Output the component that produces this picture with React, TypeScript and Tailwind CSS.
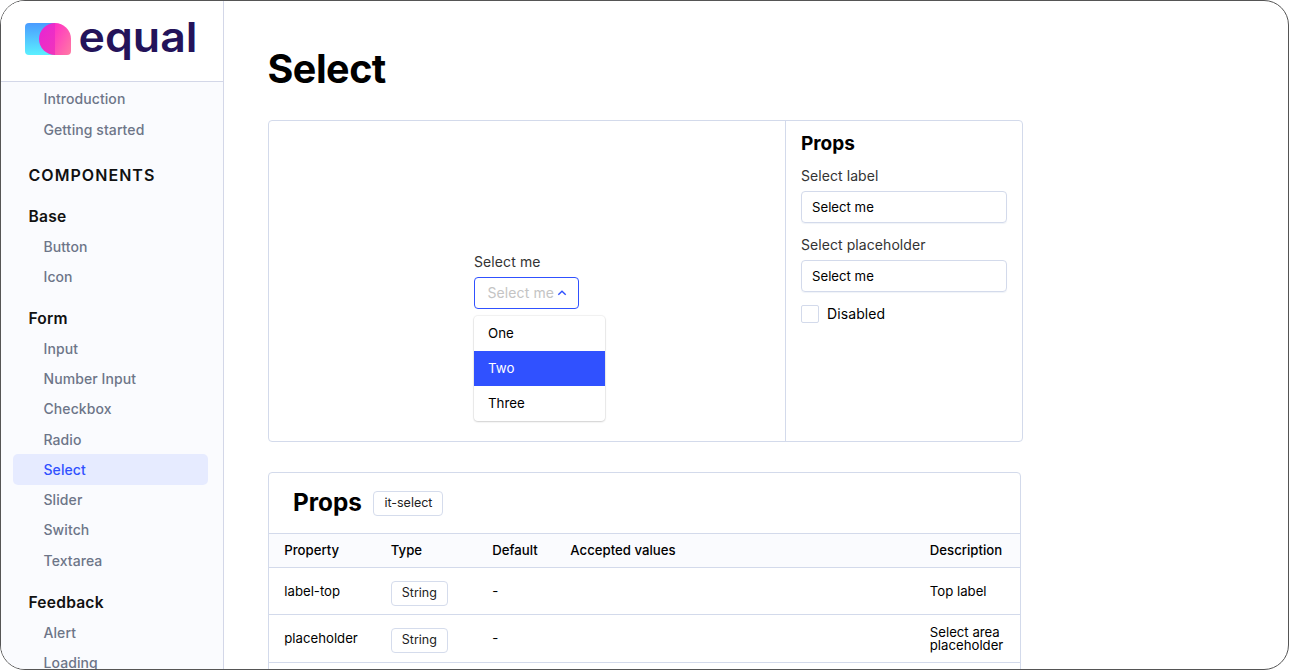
import React from "react";

const groups = [
  { title: "Base", items: ["Button", "Icon"] },
  {
    title: "Form",
    items: ["Input", "Number Input", "Checkbox", "Radio", "Select", "Slider", "Switch", "Textarea"],
  },
  { title: "Feedback", items: ["Alert", "Loading"] },
];

const rows = [
  { property: "label-top", type: "String", def: "-", accepted: "", description: "Top label" },
  { property: "placeholder", type: "String", def: "-", accepted: "", description: "Select area placeholder" },
  { property: "", type: "", def: "", accepted: "", description: "" },
];

function Logo() {
  return (
    <svg width="190" height="56" viewBox="0 0 190 56" className="block overflow-visible">
      <defs>
        <linearGradient id="sky" x1="0" y1="0" x2="0" y2="1">
          <stop offset="0" stopColor="#4a9bff" />
          <stop offset="1" stopColor="#5bf0ff" />
        </linearGradient>
        <linearGradient id="pink" x1="0" y1="0" x2="1" y2="1">
          <stop offset="0" stopColor="#ff2fc6" />
          <stop offset="1" stopColor="#ff7ba3" />
        </linearGradient>
        <linearGradient id="magenta" x1="0" y1="0" x2="0.8" y2="1">
          <stop offset="0" stopColor="#e624d6" />
          <stop offset="1" stopColor="#f033bd" />
        </linearGradient>
      </defs>
      <path d="M4 7H30V39H4Q0 39 0 35V11Q0 7 4 7Z" fill="url(#sky)" />
      <path d="M30 7A16 16 0 0 1 46 23V35Q46 39 42 39H30Z" fill="url(#pink)" />
      <path d="M30 7A16 16 0 0 0 30 39Z" fill="url(#magenta)" />
      <text
        x="53.5"
        y="35.5"
        textLength="119"
        lengthAdjust="spacingAndGlyphs"
        fill="#24135a"
        className="font-['Inter',sans-serif] text-[41px] font-semibold"
      >
        equal
      </text>
    </svg>
  );
}

function NavItem({ label }: { label: string }) {
  const active = label === "Select";
  return (
    <a
      className={
        "ml-3 flex h-[30.25px] w-[195px] items-center rounded-[5px] pl-[30.5px] text-[14px] font-[450] tracking-[0.08px] " +
        (active ? "bg-[#e6ebff] text-[#3051ff]" : "text-[#6d7588]")
      }
    >
      {label}
    </a>
  );
}

function Tag({ children }: { children: React.ReactNode }) {
  return (
    <span className="inline-flex h-[25px] items-center rounded-[4px] border border-[#d5dcec] bg-white px-[10px] text-[12.5px] leading-none text-[#222]">
      {children}
    </span>
  );
}

function Field({ label, value }: { label: string; value: string }) {
  return (
    <div className="mb-[12px]">
      <div className="mb-[5px] h-5 text-[14px] leading-5 tracking-[0.07px] text-[#333]">{label}</div>
      <div className="flex h-8 items-center rounded-[4px] border border-[#d3daeb] px-[10px] pt-px text-[13.2px] shadow-[0_1px_1px_rgba(48,81,160,0.07)]">
        {value}
      </div>
    </div>
  );
}

const cols = "grid grid-cols-[106.5px_101.5px_78px_359.5px_1fr] pl-[15.3px]";

export default function App() {
  return (
    <div className="h-[670px] w-[1289px] bg-white font-['Inter',sans-serif] text-black">
      <div className="flex h-full overflow-hidden rounded-[25px] border border-[#555]">
        <aside className="w-[223px] shrink-0 border-r border-[#d3d7e8] bg-[#fafbfe]">
          <div className="h-[81px] border-b border-[#d3d7e8] bg-white pl-6 pt-[15px]">
            <Logo />
          </div>
          <nav className="pt-[1.75px]">
            <NavItem label="Introduction" />
            <NavItem label="Getting started" />
            <div className="mb-[11.4px] mt-[15.25px] flex h-[30px] items-center pl-[27.5px] text-[16px] font-semibold tracking-[1.05px] text-[#111]">
              COMPONENTS
            </div>
            {groups.map((g) => (
              <div key={g.title} className="mb-[11.4px]">
                <div className="flex h-[30.25px] items-center pl-[27.5px] pt-px text-[15.6px] font-semibold tracking-[0.2px] text-[#111]">
                  {g.title}
                </div>
                {g.items.map((i) => (
                  <NavItem key={i} label={i} />
                ))}
              </div>
            ))}
          </nav>
        </aside>

        <main className="pl-[44px] pt-[44px]">
          <h1 className="-ml-[0.5px] h-[48px] text-[39.5px] font-bold leading-[49px] tracking-[-0.5px]">Select</h1>

          <section className="mt-[27px] flex h-[322px] w-[755px] rounded-[4px] border border-[#d3daeb]">
            <div className="w-[517px] border-r border-[#d3daeb] pl-[205px] pt-[131px]">
              <div className="h-5 text-[14px] leading-5 tracking-[0.1px] text-[#333]">Select me</div>
              <div className="mt-[5px] flex h-8 w-[105px] items-center rounded-[4px] border border-[#3051ff] pl-[12.5px] text-[14px] tracking-[0.1px] text-[#c4c4c4]">
                <span className="-mt-px w-[69.5px] whitespace-nowrap">Select me</span>
                <svg width="10" height="8" viewBox="0 0 10 8" fill="none" className="shrink-0">
                  <path d="M1.3 5.8L5 2.2L8.7 5.8" stroke="#3051ff" strokeWidth="1.4" />
                </svg>
              </div>
              <div className="mt-[7px] w-[131px] overflow-hidden rounded-[4px] text-[13.3px] shadow-[0_0_1px_1px_rgba(0,0,0,0.06),0_1px_2px_rgba(0,0,0,0.14)]">
                <div className="flex h-[35px] items-center pl-[14px]">One</div>
                <div className="flex h-[35px] items-center bg-[#3051ff] pl-[14px] text-white">Two</div>
                <div className="flex h-[35px] items-center pl-[14px]">Three</div>
              </div>
            </div>
            <div className="flex-1 px-[15px] pt-[10px]">
              <h2 className="mb-[11px] h-6 text-[19px] font-bold leading-[25px]">Props</h2>
              <Field label="Select label" value="Select me" />
              <Field label="Select placeholder" value="Select me" />
              <div className="-mt-px flex h-5 items-center gap-2 text-[14px] tracking-[0.1px]">
                <span className="mt-[2px] h-[18px] w-[18px] rounded-[2px] border border-[#d3daeb]" />
                Disabled
              </div>
            </div>
          </section>

          <section className="mt-[30px] w-[753px] rounded-t-[4px] border border-[#d3daeb]">
            <div className="flex h-[60px] items-center gap-[11.5px] pl-6">
              <h2 className="-mt-[2px] text-[24.3px] font-bold leading-none">Props</h2>
              <Tag>it-select</Tag>
            </div>
            <div className={cols + " h-[35px] items-center border-y border-[#d3daeb] bg-[#fafbfe] text-[13.2px] font-medium"}>
              <span>Property</span>
              <span>Type</span>
              <span>Default</span>
              <span>Accepted values</span>
              <span>Description</span>
            </div>
            {rows.map((r, i) => (
              <div key={i} className={cols + " h-[47.3px] items-center border-b border-[#d3daeb] text-[13.2px] leading-[13.3px]"}>
                <span>{r.property}</span>
                <span className="pt-1">{r.type && <Tag>{r.type}</Tag>}</span>
                <span>{r.def}</span>
                <span>{r.accepted}</span>
                <span className="w-[80px] pt-px">{r.description}</span>
              </div>
            ))}
          </section>
        </main>
      </div>
    </div>
  );
}
